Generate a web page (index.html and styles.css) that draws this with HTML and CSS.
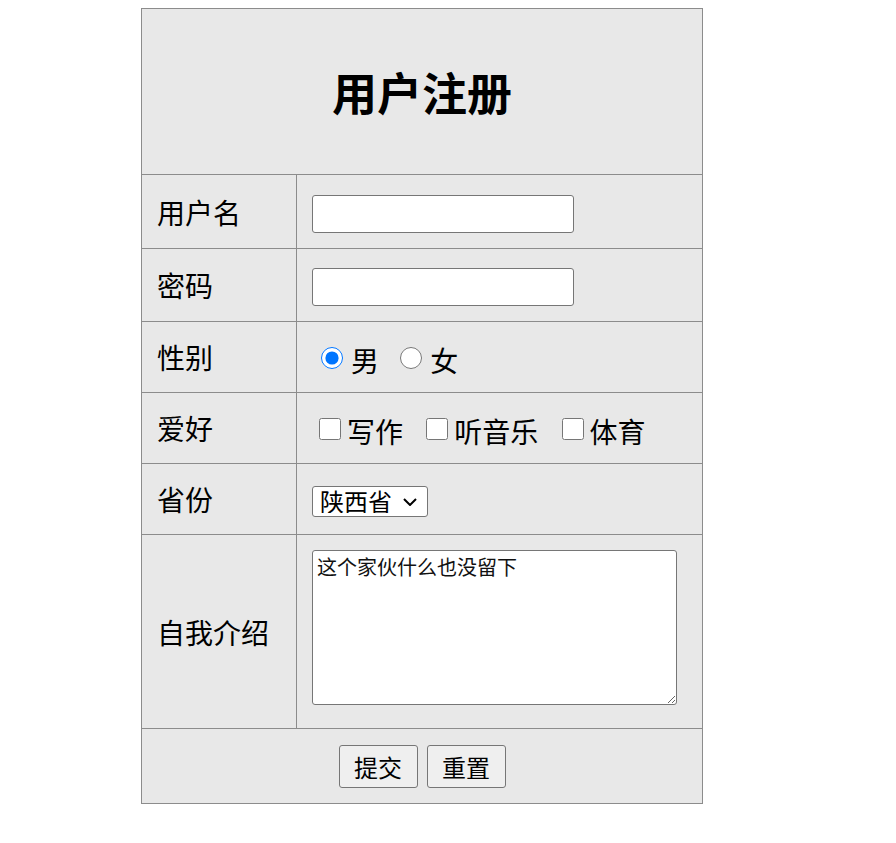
FILE: index.html
```html
<!DOCTYPE html>
<html>
    <head>
        <meta charset="utf-8">
        <title>用户注册</title>
        <link rel="stylesheet" href="styles.css">
    </head>
    <body>
        <form>
            <table class="reg_table">
                <tr>
                    <th colspan="2" class="title_cell"><h1>用户注册</h1></th>
                </tr>
                <tr class="row_input row_first">
                    <td class="label_cell">用户名</td>
                    <td><input type="text" class="text_input"></td>
                </tr>
                <tr class="row_input">
                    <td class="label_cell">密码</td>
                    <td><input type="password" class="text_input"></td>
                </tr>
                <tr class="row_choice">
                    <td class="label_cell">性别</td>
                    <td class="choices">
                        <label class="radio_label"><input type="radio" name="sex" class="radio" checked>男</label>
                        <label class="radio_label"><input type="radio" name="sex" class="radio">女</label>
                    </td>
                </tr>
                <tr class="row_choice">
                    <td class="label_cell">爱好</td>
                    <td class="choices">
                        <label class="check_label"><input type="checkbox" class="check">写作</label>
                        <label class="check_label"><input type="checkbox" class="check">听音乐</label>
                        <label class="check_label"><input type="checkbox" class="check">体育</label>
                    </td>
                </tr>
                <tr class="row_choice">
                    <td class="label_cell">省份</td>
                    <td>
                        <span class="select_wrap">
                            <select class="province">
                                <option>陕西省</option>
                                <option>山西省</option>
                                <option>河南省</option>
                            </select>
                            <!-- chevron drawn over the select -->
                            <svg class="chevron" width="14" height="8" viewBox="0 0 14 8">
                                <path d="M1 1 L7 7 L13 1" fill="none" stroke="#000" stroke-width="2"/>
                            </svg>
                        </span>
                    </td>
                </tr>
                <tr class="row_intro">
                    <td class="label_cell">自我介绍</td>
                    <td><textarea class="intro">这个家伙什么也没留下</textarea></td>
                </tr>
                <tr class="row_buttons">
                    <td colspan="2" class="button_cell">
                        <div class="buttons">
                            <button type="submit">提交</button>
                            <button type="reset">重置</button>
                        </div>
                    </td>
                </tr>
            </table>
        </form>
    </body>
</html>
```

FILE: styles.css
```css
body {
    margin: 8px;
    font-family: "Noto Sans CJK SC", "Noto Sans", sans-serif;
}
.reg_table {
    margin-left: 133px;
    width: 562px;
    border-collapse: collapse;
    background-color: #e8e8e8;
}
.reg_table th,
.reg_table td {
    border: 1px solid #8c8c8c;
    padding: 0 15px;
    font-size: 28px;
    font-weight: normal;
}
.title_cell {
    height: 165px;
    text-align: center;
}
.title_cell h1 {
    margin: 0;
    font-size: 45px;
    font-weight: bold;
    line-height: 1;
}
.label_cell {
    width: 124px;
}
.row_input td {
    height: 72px;
}
.row_first td {
    height: 73px;
}
.row_choice td {
    height: 70px;
}
.row_intro td {
    height: 193px;
}
.row_buttons td {
    height: 74px;
}
.text_input {
    width: 262px;
    height: 38px;
    box-sizing: border-box;
    border: 1px solid #767676;
    border-radius: 3px;
    background: white;
    margin: 4px 0 0 0;
    display: block;
}
.choices label {
    display: inline-flex;
    align-items: center;
    line-height: 1;
}
.radio {
    width: 22px;
    height: 22px;
    margin: 0 8px 3px 9px;
    accent-color: #0075ff;
}
.check {
    width: 22px;
    height: 22px;
    margin: 0 6px 3px 7px;
}
.radio_label + .radio_label {
    margin-left: 6px;
}
.check_label + .check_label {
    margin-left: 10px;
}
.select_wrap {
    position: relative;
    display: inline-block;
    margin-top: 7px;
}
.province {
    appearance: none;
    -webkit-appearance: none;
    font-family: inherit;
    font-size: 24px;
    line-height: 1;
    width: 116px;
    height: 31px;
    box-sizing: border-box;
    padding: 0 0 0 7px;
    border: 1px solid #767676;
    border-radius: 3px;
    background: white;
    color: black;
    display: block;
}
.chevron {
    position: absolute;
    right: 11px;
    top: 12px;
    pointer-events: none;
}
.intro {
    width: 365px;
    height: 155px;
    box-sizing: border-box;
    display: block;
    font-family: "Noto Sans CJK SC", sans-serif;
    font-size: 20px;
    line-height: 1.2;
    color: #111;
    padding: 4px 4px;
    margin-bottom: 8px;
    border: 1px solid #767676;
    border-radius: 3px;
    resize: both;
}
.buttons {
    display: flex;
    justify-content: center;
    gap: 9px;
}
.buttons button {
    font-family: inherit;
    font-size: 24px;
    width: 79px;
    height: 43px;
    padding: 0;
    margin: 0;
    border: 1px solid #767676;
    border-radius: 3px;
    background-color: #efefef;
    color: black;
}
```
